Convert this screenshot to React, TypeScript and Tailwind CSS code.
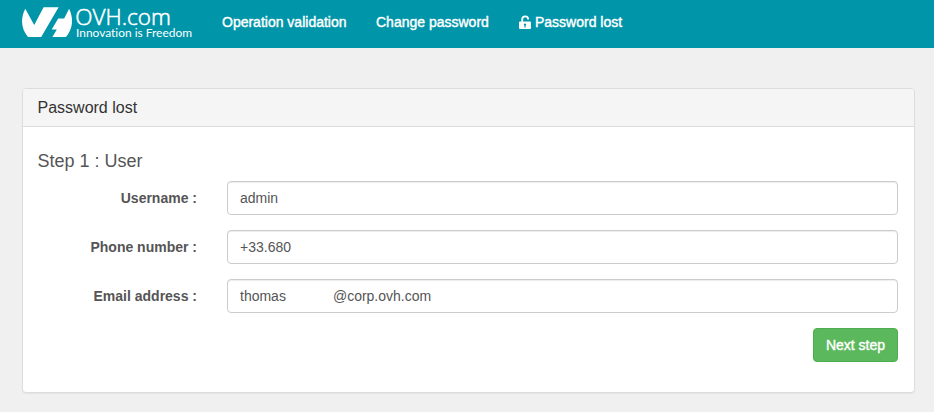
import React from 'react';

function Logo() {
  return (
    <a href="#" className="block h-12 w-[180px]" aria-label="OVH.com">
      <svg width="180" height="48" viewBox="22 0 180 48" fill="#fff">
        <path d="M25.3 8.7 34.2 25 43.6 7.2H58.6L41.2 37H28C20.8 28.5 20.4 18 25.3 8.7Z" />
        <path d="M69.1 8.7C73.6 18 73.2 28.5 66 37H52.4L56.8 29.4H51.7L58.2 18.6H64.2Z" />
        <text x="75.3" y="24.5" fontSize="22" fontWeight="300" stroke="#fff" strokeWidth="0.55" fontFamily="'Open Sans', sans-serif" textLength="95.5" lengthAdjust="spacingAndGlyphs">OVH.com</text>
        <text x="76" y="36.8" fontSize="11.5" fontFamily="Lato, sans-serif" className="[font-variant-ligatures:none]" textLength="116" lengthAdjust="spacingAndGlyphs">Innovation is Freedom</text>
      </svg>
    </a>
  );
}

function UnlockIcon() {
  return (
    <svg className="mr-[4px] shrink-0" width="12" height="15" viewBox="0 0 12 15">
      <path d="M3.2 7V4.4C3.2 2.5 4.4 1.3 6.2 1.3S9.2 2.5 9.2 4.6" fill="none" stroke="#fff" strokeWidth="1.8" />
      <path fill="#fff" fillRule="evenodd" d="M1 6.6H11Q12 6.6 12 7.6V13Q12 14 11 14H1Q0 14 0 13V7.6Q0 6.6 1 6.6ZM6 8.4A1.2 1.2 0 0 0 5.4 10.6V12.4H6.6V10.6A1.2 1.2 0 0 0 6 8.4Z" />
    </svg>
  );
}

const fields = [
  { label: 'Username :', parts: ['admin'] },
  { label: 'Phone number :', parts: ['+33.680'] },
  { label: 'Email address :', parts: ['thomas', '@corp.ovh.com'] },
];

export default function App() {
  return (
    <div className="h-[412px] w-[934px] overflow-hidden bg-[#f0f0f0] font-['Liberation_Sans',Arial,sans-serif] text-sm text-[#555]">
      <nav className="flex h-12 items-center bg-[#0095a9] pb-1 pl-[22px] text-white">
        <div className="-mb-1">
          <Logo />
        </div>
        <div className="ml-5 flex items-center gap-[30px] leading-5 [-webkit-text-stroke:0.4px_white]">
          <a href="#" className="w-[124px] whitespace-nowrap">Operation validation</a>
          <a href="#" className="w-[113px] whitespace-nowrap">Change password</a>
          <a href="#" className="flex items-center whitespace-nowrap">
            <UnlockIcon />
            Password lost
          </a>
        </div>
      </nav>
      <main className="pt-10 pl-[22px]">
        <section className="h-[305px] w-[893px] rounded border border-[#ddd] bg-white shadow-[0_1px_1px_rgba(0,0,0,0.05)]">
          <header className="h-[38px] rounded-t-[3px] border-b border-[#ddd] bg-[#f5f5f5] px-[14.5px] pt-[10px] text-base leading-[18px] text-[#333]">
            Password lost
          </header>
          <div className="pt-6 pr-4 pl-[14.5px]">
            <h2 className="mb-[10px] text-lg leading-5">Step 1 : User</h2>
            <form className="flex flex-col gap-[15px]">
              {fields.map((f) => (
                <div key={f.label} className="flex h-[34px]">
                  <label className="w-[159.5px] pt-[7px] text-right leading-5 font-bold">{f.label}</label>
                  <div className="ml-[30px] flex w-[671px] gap-[47px] rounded border border-[#ccc] bg-white px-3 py-[6px] leading-5 shadow-[inset_0_1px_1px_rgba(0,0,0,0.075)]">
                    {f.parts.map((p) => (
                      <span key={p}>{p}</span>
                    ))}
                  </div>
                </div>
              ))}
              <div className="flex justify-end">
                <button type="button" className="h-[34px] w-[85px] rounded border border-[#4cae4c] bg-[#5cb85c] whitespace-nowrap text-white [-webkit-text-stroke:0.4px_white]">
                  Next step
                </button>
              </div>
            </form>
          </div>
        </section>
      </main>
    </div>
  );
}
